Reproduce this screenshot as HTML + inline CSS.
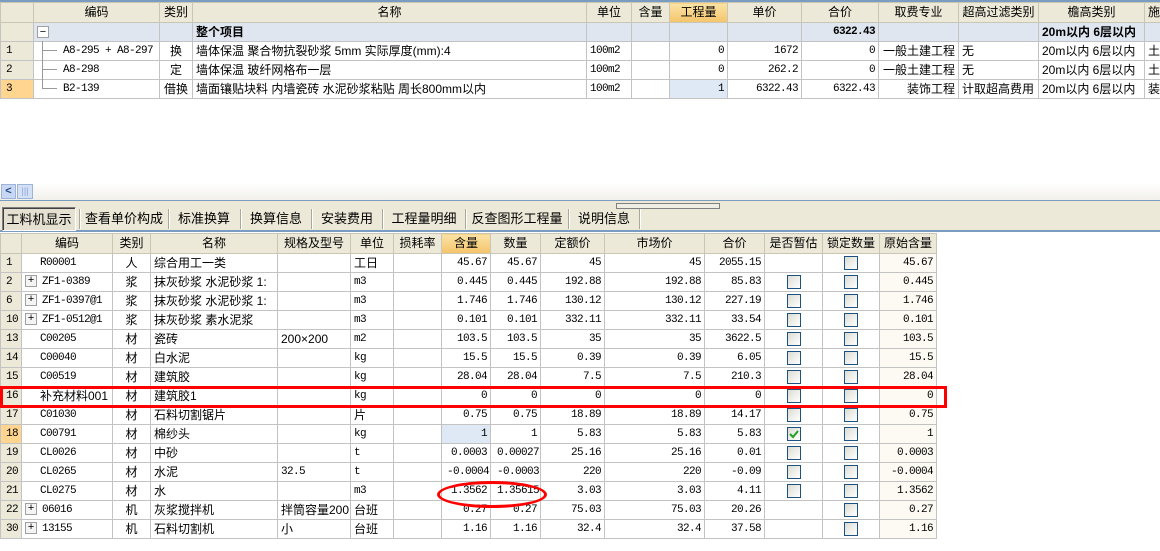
<!DOCTYPE html>
<html><head><meta charset="utf-8">
<style>
*{margin:0;padding:0;box-sizing:border-box}
body{width:1160px;height:551px;overflow:hidden;background:#fff;position:relative;font:12px "Liberation Sans","Noto Sans CJK SC",sans-serif;color:#000}
table{border-collapse:collapse;table-layout:fixed;position:absolute;left:0}
td{border:1px solid #c3c3c3;height:19px;padding:0 3px;white-space:nowrap;overflow:hidden;font-size:12px;line-height:17px;vertical-align:middle}
.n{text-align:right;font-family:"Liberation Mono",monospace;font-size:11px;letter-spacing:-0.6px}
.m{font-family:"Liberation Mono",monospace;font-size:11px;letter-spacing:-0.6px}
.h td{background:#ece9d8;text-align:center;height:20px;border-color:#c9c6b6}
.h td.o{background:linear-gradient(#fbe3a6,#f4c46b)}
td.rn{background:#ece9d8;text-align:left;padding-left:5px;font-family:"Liberation Mono",monospace;font-size:11px;letter-spacing:-0.6px}
td.ro{background:#ffd590}
td.c{text-align:center}
td.b{background:#dfe8f5}
td.og{background:#fdfaf4}
.cb{display:inline-block;width:14px;height:14px;border:1px solid #1c5180;background:linear-gradient(135deg,#dcdcd4,#fff);vertical-align:middle;position:relative}
.pl{display:inline-block;width:12px;height:12px;border:1px solid #a0a0a0;background:#f4f4f4;font-size:11px;line-height:10px;text-align:center;vertical-align:middle;margin-right:5px;letter-spacing:0}
.tab{position:absolute;top:207px;height:24px;line-height:24px;font-size:13px;text-align:center}
.sep{position:absolute;top:209px;width:2px;height:20px;border-left:1px solid #aca899;border-right:1px solid #fff}
</style></head><body>
<div style="position:absolute;left:0;top:0;width:1160px;height:2px;background:#7a9cc0"></div>
<table style="top:2px;width:1180px">
<colgroup><col style="width:33px"><col style="width:126px"><col style="width:33px"><col style="width:394px"><col style="width:45px"><col style="width:38px"><col style="width:58px"><col style="width:74px"><col style="width:77px"><col style="width:80px"><col style="width:80px"><col style="width:106px"><col style="width:36px"></colgroup>
<tr class="h"><td></td><td>编码</td><td>类别</td><td>名称</td><td>单位</td><td>含量</td><td class="o">工程量</td><td>单价</td><td>合价</td><td>取费专业</td><td>超高过滤类别</td><td>檐高类别</td><td style="text-align:left">施工</td></tr>
<tr style="background:#dfe6f0"><td class="rn"></td><td><span class="pl" style="margin-left:0;background:#fff">−</span></td><td></td><td style="font-weight:bold">整个项目</td><td></td><td></td><td></td><td></td><td class="n" style="font-weight:bold">6322.43</td><td></td><td></td><td style="font-weight:bold">20m以内 6层以内</td><td></td></tr>
<tr><td class="rn">1</td><td class="m" style="padding-left:29px">A8-295 + A8-297</td><td class="c">换</td><td>墙体保温 聚合物抗裂砂浆 5mm 实际厚度(mm):4</td><td class="m">100m2</td><td></td><td class="n">0</td><td class="n">1672</td><td class="n">0</td><td style="text-align:right">一般土建工程</td><td>无</td><td>20m以内 6层以内</td><td>土建</td></tr>
<tr><td class="rn">2</td><td class="m" style="padding-left:29px">A8-298</td><td class="c">定</td><td>墙体保温 玻纤网格布一层</td><td class="m">100m2</td><td></td><td class="n">0</td><td class="n">262.2</td><td class="n">0</td><td style="text-align:right">一般土建工程</td><td>无</td><td>20m以内 6层以内</td><td>土建</td></tr>
<tr><td class="rn ro">3</td><td class="m" style="padding-left:29px">B2-139</td><td class="c">借换</td><td>墙面镶贴块料 内墙瓷砖 水泥砂浆粘贴 周长800mm以内</td><td class="m">100m2</td><td></td><td class="n b">1</td><td class="n">6322.43</td><td class="n">6322.43</td><td style="text-align:right">装饰工程</td><td>计取超高费用</td><td>20m以内 6层以内</td><td>装饰</td></tr>
</table>
<div style="position:absolute;left:42px;top:41px;width:1px;height:48px;background:#999"></div>
<div style="position:absolute;left:42px;top:50px;width:15px;height:1px;background:#999"></div>
<div style="position:absolute;left:42px;top:69px;width:15px;height:1px;background:#999"></div>
<div style="position:absolute;left:42px;top:88px;width:15px;height:1px;background:#999"></div>
<div style="position:absolute;left:0;top:183px;width:1160px;height:17px;background:linear-gradient(#fff,#f1f0ea)"></div>
<div style="position:absolute;left:1px;top:184px;width:15px;height:15px;border:1px solid #9db4d8;background:#c8d8f4;color:#264b8a;font-size:11px;line-height:13px;text-align:center;font-weight:bold">&lt;</div>
<div style="position:absolute;left:17px;top:184px;width:16px;height:15px;border:1px solid #9db4d8;background:#d4e0f6;color:#8aa4d4;font-size:9px;line-height:13px;text-align:center">|||</div>
<div style="position:absolute;left:0;top:200px;width:1160px;height:32px;background:#ece9d8;border-top:1px solid #7a9cc0;border-bottom:2px solid #7a9cc0"></div>
<div style="position:absolute;left:616px;top:203px;width:104px;height:6px;border:1px solid #808080;background:#f0eee4"></div>
<div class="tab" style="left:2px;width:74px;border:1px solid #808080;background:#e4e1d2;border-right-color:#fff;border-bottom-color:#fff;border-top-color:#808080;box-shadow:inset 1px 1px 0 #404040">工料机显示</div>
<div class="sep" style="left:79px"></div>
<div class="tab" style="left:82px;width:84px">查看单价构成</div>
<div class="sep" style="left:168px"></div>
<div class="tab" style="left:170px;width:68px">标准换算</div>
<div class="sep" style="left:240px"></div>
<div class="tab" style="left:242px;width:68px">换算信息</div>
<div class="sep" style="left:311px"></div>
<div class="tab" style="left:313px;width:68px">安装费用</div>
<div class="sep" style="left:382px"></div>
<div class="tab" style="left:384px;width:80px">工程量明细</div>
<div class="sep" style="left:465px"></div>
<div class="tab" style="left:467px;width:100px">反查图形工程量</div>
<div class="sep" style="left:568px"></div>
<div class="tab" style="left:570px;width:68px">说明信息</div>
<div class="sep" style="left:639px"></div>
<table style="top:233px;width:936px">
<colgroup><col style="width:21px"><col style="width:91px"><col style="width:38px"><col style="width:127px"><col style="width:73px"><col style="width:43px"><col style="width:48px"><col style="width:49px"><col style="width:50px"><col style="width:64px"><col style="width:100px"><col style="width:60px"><col style="width:58px"><col style="width:57px"><col style="width:57px"></colgroup>
<tr class="h"><td></td><td>编码</td><td>类别</td><td>名称</td><td>规格及型号</td><td>单位</td><td>损耗率</td><td class="o">含量</td><td>数量</td><td>定额价</td><td>市场价</td><td>合价</td><td>是否暂估</td><td>锁定数量</td><td>原始含量</td></tr>
<tr><td class="rn">1</td><td class="m" style="padding-left:18px">R00001</td><td class="c">人</td><td>综合用工一类</td><td></td><td>工日</td><td></td><td class="n">45.67</td><td class="n">45.67</td><td class="n">45</td><td class="n">45</td><td class="n">2055.15</td><td></td><td class="c"><span class="cb"></span></td><td class="n og">45.67</td></tr>
<tr><td class="rn">2</td><td class="m"><span class="pl">+</span>ZF1-0389</td><td class="c">浆</td><td>抹灰砂浆 水泥砂浆 1:</td><td></td><td class="m">m3</td><td></td><td class="n">0.445</td><td class="n">0.445</td><td class="n">192.88</td><td class="n">192.88</td><td class="n">85.83</td><td class="c"><span class="cb"></span></td><td class="c"><span class="cb"></span></td><td class="n og">0.445</td></tr>
<tr><td class="rn">6</td><td class="m"><span class="pl">+</span>ZF1-0397@1</td><td class="c">浆</td><td>抹灰砂浆 水泥砂浆 1:</td><td></td><td class="m">m3</td><td></td><td class="n">1.746</td><td class="n">1.746</td><td class="n">130.12</td><td class="n">130.12</td><td class="n">227.19</td><td class="c"><span class="cb"></span></td><td class="c"><span class="cb"></span></td><td class="n og">1.746</td></tr>
<tr><td class="rn">10</td><td class="m"><span class="pl">+</span>ZF1-0512@1</td><td class="c">浆</td><td>抹灰砂浆 素水泥浆</td><td></td><td class="m">m3</td><td></td><td class="n">0.101</td><td class="n">0.101</td><td class="n">332.11</td><td class="n">332.11</td><td class="n">33.54</td><td class="c"><span class="cb"></span></td><td class="c"><span class="cb"></span></td><td class="n og">0.101</td></tr>
<tr><td class="rn">13</td><td class="m" style="padding-left:18px">C00205</td><td class="c">材</td><td>瓷砖</td><td>200×200</td><td class="m">m2</td><td></td><td class="n">103.5</td><td class="n">103.5</td><td class="n">35</td><td class="n">35</td><td class="n">3622.5</td><td class="c"><span class="cb"></span></td><td class="c"><span class="cb"></span></td><td class="n og">103.5</td></tr>
<tr><td class="rn">14</td><td class="m" style="padding-left:18px">C00040</td><td class="c">材</td><td>白水泥</td><td></td><td class="m">kg</td><td></td><td class="n">15.5</td><td class="n">15.5</td><td class="n">0.39</td><td class="n">0.39</td><td class="n">6.05</td><td class="c"><span class="cb"></span></td><td class="c"><span class="cb"></span></td><td class="n og">15.5</td></tr>
<tr><td class="rn">15</td><td class="m" style="padding-left:18px">C00519</td><td class="c">材</td><td>建筑胶</td><td></td><td class="m">kg</td><td></td><td class="n">28.04</td><td class="n">28.04</td><td class="n">7.5</td><td class="n">7.5</td><td class="n">210.3</td><td class="c"><span class="cb"></span></td><td class="c"><span class="cb"></span></td><td class="n og">28.04</td></tr>
<tr><td class="rn">16</td><td style="padding-left:18px">补充材料001</td><td class="c">材</td><td>建筑胶1</td><td></td><td class="m">kg</td><td></td><td class="n">0</td><td class="n">0</td><td class="n">0</td><td class="n">0</td><td class="n">0</td><td class="c"><span class="cb"></span></td><td class="c"><span class="cb"></span></td><td class="n og">0</td></tr>
<tr><td class="rn">17</td><td class="m" style="padding-left:18px">C01030</td><td class="c">材</td><td>石料切割锯片</td><td></td><td>片</td><td></td><td class="n">0.75</td><td class="n">0.75</td><td class="n">18.89</td><td class="n">18.89</td><td class="n">14.17</td><td class="c"><span class="cb"></span></td><td class="c"><span class="cb"></span></td><td class="n og">0.75</td></tr>
<tr><td class="rn ro">18</td><td class="m" style="padding-left:18px">C00791</td><td class="c">材</td><td>棉纱头</td><td></td><td class="m">kg</td><td></td><td class="n b">1</td><td class="n">1</td><td class="n">5.83</td><td class="n">5.83</td><td class="n">5.83</td><td class="c"><span class="cb"><svg width="12" height="12" style="position:absolute;left:0;top:0"><path d="M2 6 L5 9 L10 3" stroke="#21a121" stroke-width="2" fill="none"/></svg></span></td><td class="c"><span class="cb"></span></td><td class="n og">1</td></tr>
<tr><td class="rn">19</td><td class="m" style="padding-left:18px">CL0026</td><td class="c">材</td><td>中砂</td><td></td><td class="m">t</td><td></td><td class="n">0.0003</td><td class="n" style="padding-right:1px">0.00027</td><td class="n">25.16</td><td class="n">25.16</td><td class="n">0.01</td><td class="c"><span class="cb"></span></td><td class="c"><span class="cb"></span></td><td class="n og">0.0003</td></tr>
<tr><td class="rn">20</td><td class="m" style="padding-left:18px">CL0265</td><td class="c">材</td><td>水泥</td><td class="m">32.5</td><td class="m">t</td><td></td><td class="n" style="padding-right:1px">-0.0004</td><td class="n" style="padding-right:1px">-0.0003</td><td class="n">220</td><td class="n">220</td><td class="n">-0.09</td><td class="c"><span class="cb"></span></td><td class="c"><span class="cb"></span></td><td class="n og">-0.0004</td></tr>
<tr><td class="rn">21</td><td class="m" style="padding-left:18px">CL0275</td><td class="c">材</td><td>水</td><td></td><td class="m">m3</td><td></td><td class="n">1.3562</td><td class="n" style="padding-right:1px">1.35615</td><td class="n">3.03</td><td class="n">3.03</td><td class="n">4.11</td><td class="c"><span class="cb"></span></td><td class="c"><span class="cb"></span></td><td class="n og">1.3562</td></tr>
<tr><td class="rn">22</td><td class="m"><span class="pl">+</span>06016</td><td class="c">机</td><td>灰浆搅拌机</td><td>拌筒容量200</td><td>台班</td><td></td><td class="n">0.27</td><td class="n">0.27</td><td class="n">75.03</td><td class="n">75.03</td><td class="n">20.26</td><td></td><td class="c"><span class="cb"></span></td><td class="n og">0.27</td></tr>
<tr><td class="rn">30</td><td class="m"><span class="pl">+</span>13155</td><td class="c">机</td><td>石料切割机</td><td>小</td><td>台班</td><td></td><td class="n">1.16</td><td class="n">1.16</td><td class="n">32.4</td><td class="n">32.4</td><td class="n">37.58</td><td></td><td class="c"><span class="cb"></span></td><td class="n og">1.16</td></tr>
</table>
<div style="position:absolute;left:0;top:386px;width:947px;height:22px;border:3px solid #f00"></div>
<div style="position:absolute;left:437px;top:481px;width:110px;height:27px;border:3px solid #f00;border-radius:50%"></div>
</body></html>
